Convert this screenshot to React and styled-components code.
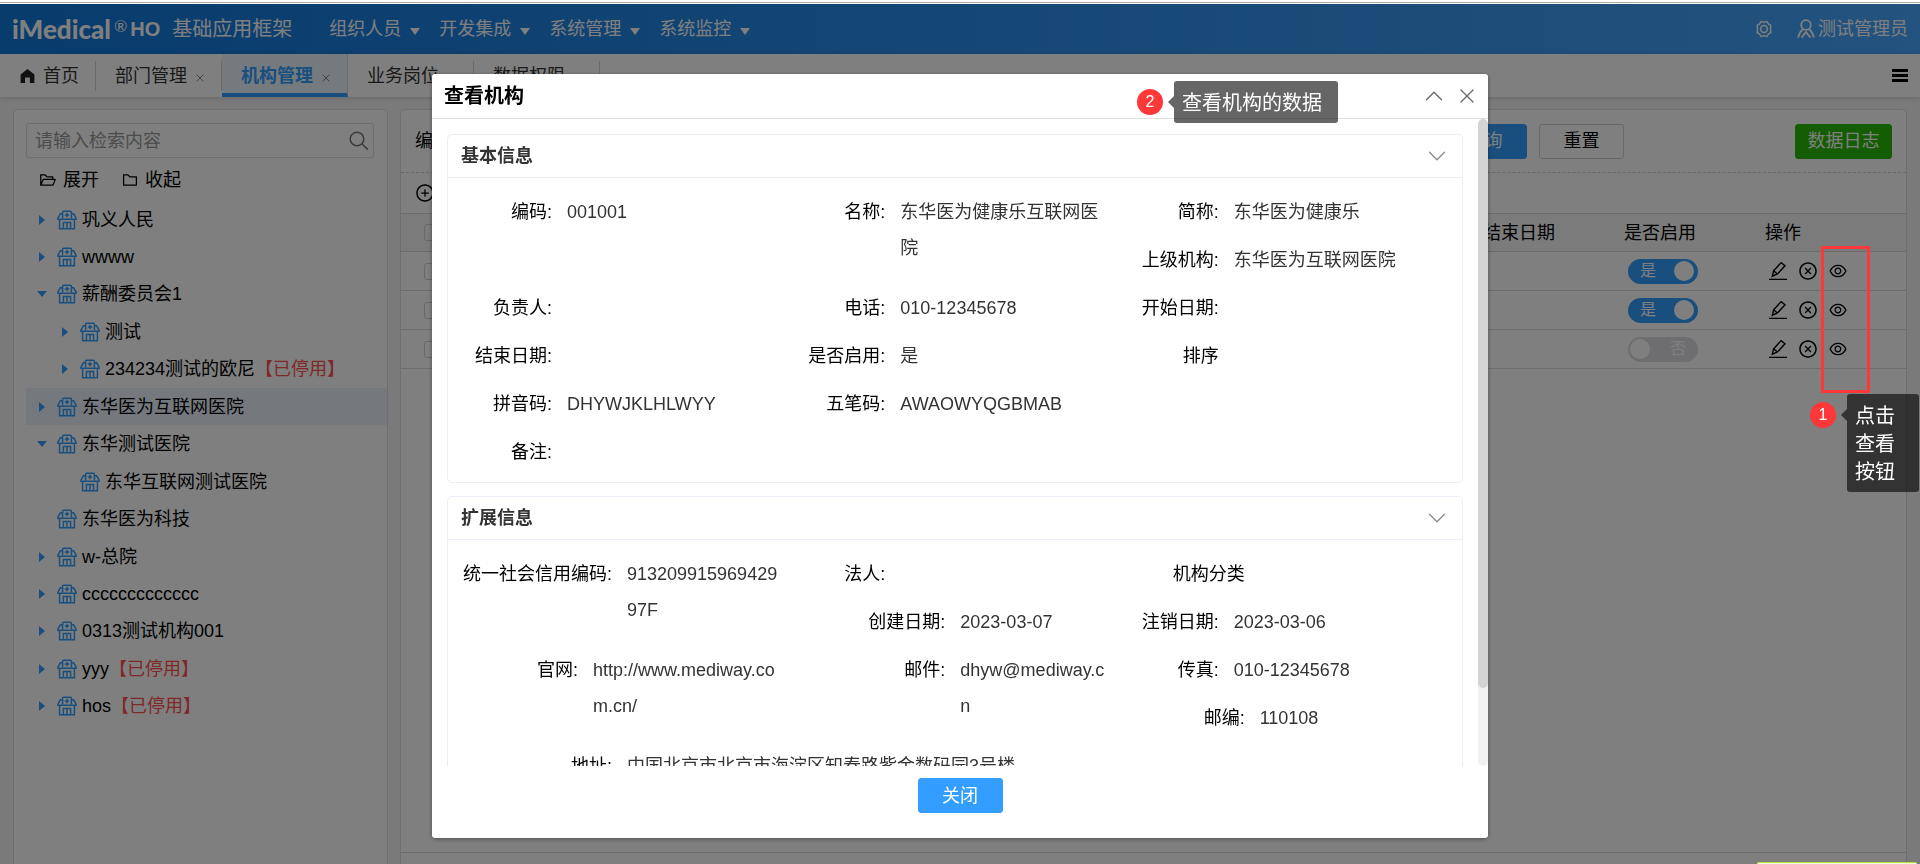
import React from 'react';
import styled, { createGlobalStyle, css } from 'styled-components';
import { ChevronDown, ChevronUp, X } from 'lucide-react';
import {
	AiOutlineCloseCircle,
	AiOutlineEye,
	AiOutlineFolder,
	AiOutlineFolderOpen,
	AiOutlinePlusCircle
} from 'react-icons/ai';

const GlobalStyle = createGlobalStyle`
	* {
		box-sizing: border-box;
	}
	body {
		margin: 0;
		font-family: 'Liberation Sans', 'Noto Sans CJK SC', sans-serif;
		font-size: 18px;
		line-height: 24px;
		color: #000;
		background: #fff;
	}
	button, input {
		font: inherit;
		color: inherit;
	}
	button {
		padding: 0;
		border: 0;
		background: none;
		cursor: pointer;
	}
	a {
		color: inherit;
		text-decoration: none;
	}
	svg {
		display: block;
		flex: none;
	}
`;

const Page = styled.div`
	display: flex;
	flex-direction: column;
	height: 100vh;
	overflow: hidden;
`;

const TopStrip = styled.div`
	flex: none;
	height: 3px;
	margin-bottom: 1px;
	border-bottom: 1px solid #aaa;
`;

/* header */

const Header = styled.header`
	display: flex;
	align-items: center;
	flex: none;
	height: 50px;
	padding: 0 12px;
	color: #fff;
	background: linear-gradient(90deg, #1078da, #46a6fc);
`;

const Brand = styled.div`
	display: flex;
	align-items: center;
	font-family: Lato, sans-serif;
	font-size: 26px;
	font-weight: 900;
	line-height: 46px;
`;

const Registered = styled.span`
	align-self: flex-start;
	margin: 0 3px;
	font-size: 16px;
	font-weight: 400;
	line-height: 40px;
`;

const Product = styled.span`
	font-family: 'Liberation Sans', sans-serif;
	font-size: 20px;
	font-weight: 700;
`;

const SystemName = styled.div`
	margin-left: 12px;
	font-size: 20px;
`;

const Menu = styled.nav`
	display: flex;
	gap: 19px;
	margin-left: 37px;
`;

const MenuButton = styled.button`
	display: flex;
	align-items: center;
	gap: 9px;
`;

const Caret = styled.span`
	margin-top: 4px;
	border: 5px solid transparent;
	border-top: 7px solid currentColor;
	border-bottom: 0;
`;

const HeaderTools = styled.div`
	display: flex;
	align-items: center;
	gap: 24px;
	margin-left: auto;
`;

const UserButton = styled.button`
	display: flex;
	align-items: center;
	gap: 3px;
`;

/* tabs */

const TabBar = styled.nav`
	display: flex;
	align-items: center;
	flex: none;
	height: 43px;
	padding-right: 12px;
	background: #fff;
	box-shadow: 0 1px 5px rgba(0, 0, 0, 0.15);
	z-index: 1;
`;

const Tab = styled.div`
	display: flex;
	align-items: center;
	gap: 7px;
	width: ${props => (props.$home ? '96px' : '126px')};
	height: 30px;
	padding-left: ${props => (props.$home ? '20px' : '19px')};
	border-right: 1px solid #d5d5d5;
	color: #333;

	a {
		display: flex;
		align-items: center;
		gap: 8px;
	}

	${props =>
		props.$active &&
		css`
			height: 43px;
			padding-top: 4px;
			border-bottom: 4px solid #339eff;
			color: #339eff;
			background: #ebf4fd;
			font-weight: 700;
		`}
`;

const TabClose = styled.button`
	padding-top: 4px;
	color: #888;
`;

const TabMenuButton = styled.button`
	display: grid;
	gap: 2px;
	width: 16px;
	margin-left: auto;

	span {
		height: 3px;
		background: #000;
	}
`;

/* work area */

const Workspace = styled.main`
	display: grid;
	grid-template-columns: 375px minmax(0, 1fr);
	gap: 12px;
	flex: 1;
	min-height: 0;
	padding: 12px 13px 0;
	background: #f4f4f4;
`;

const Panel = styled.section`
	display: flex;
	flex-direction: column;
	border: 1px solid #dcdcdc;
	border-bottom: 0;
	border-radius: 5px 5px 0 0;
	background: #fff;
`;

const SearchBox = styled.label`
	display: flex;
	align-items: center;
	height: 35px;
	margin: 13px 13px 0 12px;
	padding: 0 4px 0 8px;
	border: 1px solid #dcdcdc;
	border-radius: 3px;
	color: #777;

	input {
		flex: 1;
		min-width: 0;
		padding: 0;
		border: 0;
		outline: 0;
		background: none;
	}
	input::placeholder {
		color: #999;
		opacity: 1;
	}
`;

const TreeTools = styled.div`
	display: flex;
	gap: 22px;
	height: 43px;
	padding: 0 25px;
`;

const IconButton = styled.button`
	display: flex;
	align-items: center;
	gap: 6px;
`;

const Tree = styled.ul`
	display: flex;
	flex-direction: column;
	justify-content: space-between;
	min-height: 524px;
	margin: 0 0 0 12px;
	padding: 0;
	list-style: none;
`;

const TreeNode = styled.li`
	display: flex;
	align-items: center;
	height: 37px;
	padding-left: ${props => 9 + props.$level * 23}px;
	white-space: nowrap;
	background: ${props => (props.$selected ? '#eaf2fc' : 'none')};
	cursor: pointer;
`;

const Toggle = styled.span`
	display: flex;
	justify-content: center;
	width: 14px;
	margin-right: 8px;

	&::before {
		content: ${props => (props.$state ? "''" : 'none')};
		border: 5px solid transparent;
		${props =>
			props.$state === 'open'
				? css`
						border-top: 6px solid #339eff;
						border-bottom: 0;
				  `
				: css`
						border-left: 6px solid #339eff;
						border-right: 0;
				  `}
	}
`;

const NodeName = styled.span`
	margin-left: 5px;
`;

const Disabled = styled.span`
	color: #ff5052;
`;

const Filters = styled.form`
	display: flex;
	align-items: center;
	gap: 12px;
	height: 63px;
	padding: 0 14px;
	border-bottom: 1px dashed #d0d0d0;
`;

const Button = styled.button`
	flex: none;
	width: ${props => (props.$wide ? '97px' : '85px')};
	height: 35px;
	border: 1px solid ${props => props.$color || '#d0d0d0'};
	border-radius: 3px;
	color: ${props => (props.$color ? '#fff' : '#000')};
	background: ${props => props.$color || '#fff'};
`;

const FilterButtons = styled.div`
	display: flex;
	gap: 12px;
	margin: 0 159px 0 auto;
`;

const TableTools = styled.div`
	display: flex;
	align-items: center;
	height: 40px;
	padding: 0 14px;
`;

const Table = styled.table`
	width: 100%;
	table-layout: fixed;
	border-collapse: collapse;
	border-top: 1px solid #d8d8d8;

	th,
	td {
		height: 39px;
		padding: 0 8px;
		border-bottom: 1px solid #d8d8d8;
		font-weight: 400;
		text-align: left;
	}
	th {
		height: 38px;
		background: #f6f6f6;
	}
`;

const Col = styled.col`
	width: ${props => props.$width || 'auto'};
`;

const RowCheck = styled.input`
	display: block;
	width: 17px;
	height: 17px;
	margin: 0 0 0 15px;
	appearance: none;
	border: 1px solid #d0d0d0;
	border-radius: 3px;
`;

const Switch = styled.label`
	display: flex;
	align-items: center;
	justify-content: space-between;
	flex-direction: ${props => (props.$on ? 'row' : 'row-reverse')};
	width: 70px;
	height: 25px;
	margin-left: 4px;
	padding: ${props => (props.$on ? '0 4px 0 12px' : '0 12px 0 2px')};
	border-radius: 13px;
	font-size: 16px;
	color: #fff;
	background: ${props => (props.$on ? '#339eff' : '#dcdde3')};

	input {
		width: 20px;
		height: 20px;
		margin: 0;
		appearance: none;
		border-radius: 50%;
		background: #fff;
	}
`;

const Actions = styled.div`
	display: flex;
	gap: 10px;
	padding-left: 3px;
`;

const PanelFooter = styled.footer`
	height: 12px;
	margin-top: auto;
	border-top: 1px solid #d8d8d8;
`;

const ChatTab = styled.div`
	position: fixed;
	right: 3px;
	bottom: 0;
	z-index: 20;
	width: 160px;
	height: 2px;
	border-top: 1px solid #b7e04c;
	border-radius: 4px 4px 0 0;
	background: #f1ffcf;
`;

/* dialog */

const Overlay = styled.div`
	position: fixed;
	inset: 4px 0 0;
	z-index: 10;
	padding-top: 70px;
	background: rgba(0, 0, 0, 0.5);
`;

const Dialog = styled.div`
	display: flex;
	flex-direction: column;
	width: 55%;
	height: calc(100vh - 100px);
	margin: 0 auto;
	border-radius: 3px;
	background: #fff;
	box-shadow: 0 1px 4px rgba(0, 0, 0, 0.4);
`;

const DialogHeader = styled.header`
	display: flex;
	align-items: center;
	justify-content: space-between;
	flex: none;
	height: 45px;
	padding: 0 9px 0 12px;
	border-bottom: 1px solid #e0e0e0;

	h2 {
		margin: 0;
		font-size: 20px;
	}
`;

const DialogTools = styled.div`
	display: flex;
	align-items: center;
	gap: 6px;
	color: #666;
`;

const DialogBody = styled.div`
	display: flex;
	flex: 1;
	min-height: 0;
`;

const Sections = styled.div`
	display: flex;
	flex-direction: column;
	gap: 13px;
	flex: 1;
	padding: 15px;
	overflow: hidden;
`;

const ScrollTrack = styled.div`
	width: 10px;
	border-radius: 5px;
	background: #f1f1f1;
`;

const ScrollThumb = styled.div`
	height: 88%;
	border-radius: 5px;
	background: #d4d4d4;
`;

const Card = styled.section`
	flex: none;
	border: 1px solid #ebeef8;
	border-radius: 5px;
`;

const CardHeader = styled.header`
	display: flex;
	align-items: center;
	justify-content: space-between;
	height: 43px;
	padding: 0 10px 0 13px;
	border-bottom: 1px solid #ebeef8;
	color: #333;

	h3 {
		margin: 0;
		font-size: 18px;
	}
	button {
		color: #888;
	}
`;

const Fields = styled.dl`
	display: grid;
	grid-template-columns: repeat(3, 1fr);
	grid-auto-rows: 48px;
	margin: 0;
	padding: 16px 14px 0 0;
	line-height: 36px;
`;

const Field = styled.div`
	display: flex;
	grid-row: span ${props => props.$rows || 1};
	${props => props.$full && 'grid-column: 1 / -1;'}
	padding-right: 3px;

	dt {
		flex: none;
		width: ${props => props.$label || 104}px;
		text-align: right;
	}
	dd {
		min-width: 0;
		margin: 0 0 0 15px;
		color: #333;
		word-break: break-all;
	}
`;

const DialogFooter = styled.footer`
	display: flex;
	justify-content: center;
	flex: none;
	height: 72px;
	padding-top: 12px;
`;

/* guide marks */

const Guide = styled.div`
	position: fixed;
	top: ${props => props.$top}px;
	right: ${props => props.$right}px;
	z-index: 30;
	display: flex;
	align-items: flex-start;
	gap: 11px;
`;

const GuideNumber = styled.span`
	width: 26px;
	height: 26px;
	margin-top: 8px;
	border-radius: 50%;
	font-size: 16px;
	line-height: 25px;
	text-align: center;
	color: #fff;
	background: #fe3838;
`;

const GuideText = styled.div`
	position: relative;
	max-width: ${props => (props.$narrow ? '72px' : 'none')};
	padding: 8px 16px 6px 8px;
	border-radius: 3px;
	font-size: 20px;
	line-height: 28px;
	color: #fff;
	background: rgba(0, 0, 0, 0.6);

	&::before {
		content: '';
		position: absolute;
		top: 15px;
		right: 100%;
		border: 6px solid transparent;
		border-left: 0;
		border-right-color: rgba(0, 0, 0, 0.6);
	}
`;

const GuideFrame = styled.div`
	position: fixed;
	top: 246px;
	right: 50px;
	z-index: 30;
	width: 49px;
	height: 147px;
	border: 3px solid #fe3838;
`;

const GearIcon = () => (
	<svg width="18" height="18" viewBox="0 0 18 18" fill="none" stroke="currentColor" strokeWidth="1.5">
		<path
			strokeLinejoin="round"
			d="M6.2 1.4L9 2.4l2.8-1 1.6 2.4 2.4 1.6L15.4 9l.4 3.6-2.4 1.6-1.6 2.4-2.8-1-2.8 1-1.6-2.4-2.4-1.6L2.6 9l-.4-3.6 2.4-1.6z"
		/>
		<circle cx="9" cy="9" r="3.4" />
	</svg>
);

const SearchIcon = () => (
	<svg width="20" height="20" viewBox="0 0 20 20" fill="none" stroke="currentColor" strokeWidth="1.5">
		<circle cx="8" cy="8" r="6.8" />
		<path d="M13 13l6 5.6" />
	</svg>
);

const UserIcon = () => (
	<svg width="18" height="20" viewBox="0 0 18 20" fill="none" stroke="currentColor" strokeWidth="1.8">
		<circle cx="9" cy="6" r="4.8" />
		<path d="M6 10C3.6 12 2 14.6 1.2 18.6M12 10c2.4 2 4 4.6 4.8 8.6M4.6 18.6L9 13l4.4 5.6" />
	</svg>
);

const HomeIcon = () => (
	<svg width="15" height="14" viewBox="0 0 15 14" fill="#222">
		<path d="M7.5 0L14.4 5.6V14H9.9V8.6H5.1V14H.6V5.6Z" />
	</svg>
);

const HospitalIcon = () => (
	<svg width="20" height="20" viewBox="0 0 20 20" fill="none" stroke="#339eff" strokeWidth="1.5">
		<path d="M5.6 8.5V2.2c0-.6.4-1 1-1h6.8c.6 0 1 .4 1 1v6.3" />
		<path d="M5.6 3.8H3.4L.9 8.2v1h18.2v-1L16.6 3.8h-2.2" />
		<path d="M2.6 9.2v9.6h14.8V9.2M6.4 18.8v-6.2h7.2v6.2M10 12.6v6.2M10 2.8v4.4M7.8 5h4.4" />
	</svg>
);

const EditIcon = () => (
	<svg width="20" height="20" viewBox="0 0 20 20" fill="none" stroke="#000" strokeWidth="1.4">
		<path d="M1 18.4h18M4.4 15.2l1.2-5.4 7.6-8.2 3.8 3.2-7.6 8.2zM5.6 9.8L9.4 13" />
	</svg>
);

const menus = ['组织人员', '开发集成', '系统管理', '系统监控'];
const tabs = ['部门管理', '机构管理', '业务岗位', '数据权限'];

const nodes = [
	{ name: '巩义人民', state: 'closed' },
	{ name: 'wwww', state: 'closed' },
	{ name: '薪酬委员会1', state: 'open' },
	{ name: '测试', state: 'closed', level: 1 },
	{ name: '234234测试的欧尼', state: 'closed', level: 1, disabled: true },
	{ name: '东华医为互联网医院', state: 'closed', selected: true },
	{ name: '东华测试医院', state: 'open' },
	{ name: '东华互联网测试医院', level: 1 },
	{ name: '东华医为科技' },
	{ name: 'w-总院', state: 'closed' },
	{ name: 'ccccccccccccc', state: 'closed' },
	{ name: '0313测试机构001', state: 'closed' },
	{ name: 'yyy', state: 'closed', disabled: true },
	{ name: 'hos', state: 'closed', disabled: true }
];

const basicFields = [
	{ label: '编码:', value: '001001', rows: 2 },
	{ label: '名称:', value: '东华医为健康乐互联网医院', rows: 2 },
	{ label: '简称:', value: '东华医为健康乐' },
	{ label: '上级机构:', value: '东华医为互联网医院' },
	{ label: '负责人:' },
	{ label: '电话:', value: '010-12345678' },
	{ label: '开始日期:' },
	{ label: '结束日期:' },
	{ label: '是否启用:', value: '是' },
	{ label: '排序' },
	{ label: '拼音码:', value: 'DHYWJKLHLWYY' },
	{ label: '五笔码:', value: 'AWAOWYQGBMAB' },
	{ label: '备注:', full: true }
];

const extraFields = [
	{ label: '统一社会信用编码:', value: '91320991596942997F', rows: 2, width: 164 },
	{ label: '法人:' },
	{ label: '机构分类', width: 130 },
	{ label: '创建日期:', value: '2023-03-07', width: 164 },
	{ label: '注销日期:', value: '2023-03-06' },
	{ label: '官网:', value: 'http://www.mediway.com.cn/', rows: 2, width: 130 },
	{ label: '邮件:', value: 'dhyw@mediway.cn', rows: 2, width: 164 },
	{ label: '传真:', value: '010-12345678' },
	{ label: '邮编:', value: '110108', width: 130 },
	{ label: '地址:', value: '中国北京市北京市海淀区知春路紫金数码园3号楼', full: true, width: 164 }
];

const rows = [true, true, false];

const FieldCard = ({ title, fields }) => (
	<Card>
		<CardHeader>
			<h3>{title}</h3>
			<button type="button" aria-label={title}>
				<ChevronDown size={30} strokeWidth={1} />
			</button>
		</CardHeader>
		<Fields>
			{fields.map(f => (
				<Field key={f.label} $rows={f.rows} $full={f.full} $label={f.width}>
					<dt>{f.label}</dt>
					<dd>{f.value}</dd>
				</Field>
			))}
		</Fields>
	</Card>
);

const App = () => {
	return (
		<Page>
			<GlobalStyle />
			<TopStrip />
			<Header>
				<Brand>
					iMedical<Registered>®</Registered>
					<Product>HO</Product>
				</Brand>
				<SystemName>基础应用框架</SystemName>
				<Menu>
					{menus.map(m => (
						<MenuButton type="button" key={m}>
							{m}
							<Caret />
						</MenuButton>
					))}
				</Menu>
				<HeaderTools>
					<button type="button" aria-label="设置">
						<GearIcon />
					</button>
					<UserButton type="button">
						<UserIcon />
						测试管理员
					</UserButton>
				</HeaderTools>
			</Header>
			<TabBar>
				<Tab $home>
					<a href="#home">
						<HomeIcon />
						首页
					</a>
				</Tab>
				{tabs.map((t, i) => (
					<Tab key={t} $active={i === 1}>
						<a href={'#tab' + i}>{t}</a>
						<TabClose type="button" aria-label="关闭">
							<X size={12} strokeWidth={2} />
						</TabClose>
					</Tab>
				))}
				<TabMenuButton type="button" aria-label="菜单">
					<span />
					<span />
					<span />
				</TabMenuButton>
			</TabBar>

			<Workspace>
				<Panel>
					<SearchBox>
						<input type="text" placeholder="请输入检索内容" aria-label="请输入检索内容" />
						<SearchIcon />
					</SearchBox>
					<TreeTools>
						<IconButton type="button">
							<AiOutlineFolderOpen size={18} />
							展开
						</IconButton>
						<IconButton type="button">
							<AiOutlineFolder size={18} />
							收起
						</IconButton>
					</TreeTools>
					<Tree>
						{nodes.map(n => (
							<TreeNode key={n.name} $level={n.level || 0} $selected={n.selected}>
								<Toggle $state={n.state} />
								<HospitalIcon />
								<NodeName>
									{n.name}
									{n.disabled && <Disabled>【已停用】</Disabled>}
								</NodeName>
							</TreeNode>
						))}
					</Tree>
				</Panel>

				<Panel>
					<Filters>
						<span>编码</span>
						<FilterButtons>
							<Button type="button" $color="#339eff">
								查询
							</Button>
							<Button type="button">重置</Button>
						</FilterButtons>
						<Button type="button" $wide $color="#29ba06">
							数据日志
						</Button>
					</Filters>
					<TableTools>
						<button type="button" aria-label="新增">
							<AiOutlinePlusCircle size={20} />
						</button>
					</TableTools>
					<Table>
						<colgroup>
							<Col $width="46px" />
							<Col />
							<Col $width="141px" />
							<Col $width="141px" />
							<Col $width="149px" />
						</colgroup>
						<thead>
							<tr>
								<th>
									<RowCheck type="checkbox" aria-label="全选" />
								</th>
								<th />
								<th>结束日期</th>
								<th>是否启用</th>
								<th>操作</th>
							</tr>
						</thead>
						<tbody>
							{rows.map((on, i) => (
								<tr key={i}>
									<td>
										<RowCheck type="checkbox" aria-label="选择" />
									</td>
									<td />
									<td />
									<td>
										<Switch $on={on}>
											{on ? '是' : '否'}
											<input type="checkbox" role="switch" defaultChecked={on} />
										</Switch>
									</td>
									<td>
										<Actions>
											<button type="button" aria-label="编辑">
												<EditIcon />
											</button>
											<button type="button" aria-label="停用">
												<AiOutlineCloseCircle size={20} />
											</button>
											<button type="button" aria-label="查看">
												<AiOutlineEye size={20} />
											</button>
										</Actions>
									</td>
								</tr>
							))}
						</tbody>
					</Table>
					<PanelFooter />
				</Panel>
			</Workspace>

			<Overlay>
				<Dialog role="dialog" aria-labelledby="dialog-title">
					<DialogHeader>
						<h2 id="dialog-title">查看机构</h2>
						<DialogTools>
							<button type="button" aria-label="收起">
								<ChevronUp size={30} strokeWidth={1} />
							</button>
							<button type="button" aria-label="关闭">
								<X size={24} strokeWidth={1.25} />
							</button>
						</DialogTools>
					</DialogHeader>
					<DialogBody>
						<Sections>
							<FieldCard title="基本信息" fields={basicFields} />
							<FieldCard title="扩展信息" fields={extraFields} />
						</Sections>
						<ScrollTrack>
							<ScrollThumb />
						</ScrollTrack>
					</DialogBody>
					<DialogFooter>
						<Button type="button" $color="#339eff">
							关闭
						</Button>
					</DialogFooter>
				</Dialog>
			</Overlay>

			<Guide $top={81} $right={582}>
				<GuideNumber>2</GuideNumber>
				<GuideText>查看机构的数据</GuideText>
			</Guide>
			<Guide $top={394} $right={1}>
				<GuideNumber>1</GuideNumber>
				<GuideText $narrow>点击查看按钮</GuideText>
			</Guide>
			<GuideFrame />
			<ChatTab />
		</Page>
	);
};

export default App;
